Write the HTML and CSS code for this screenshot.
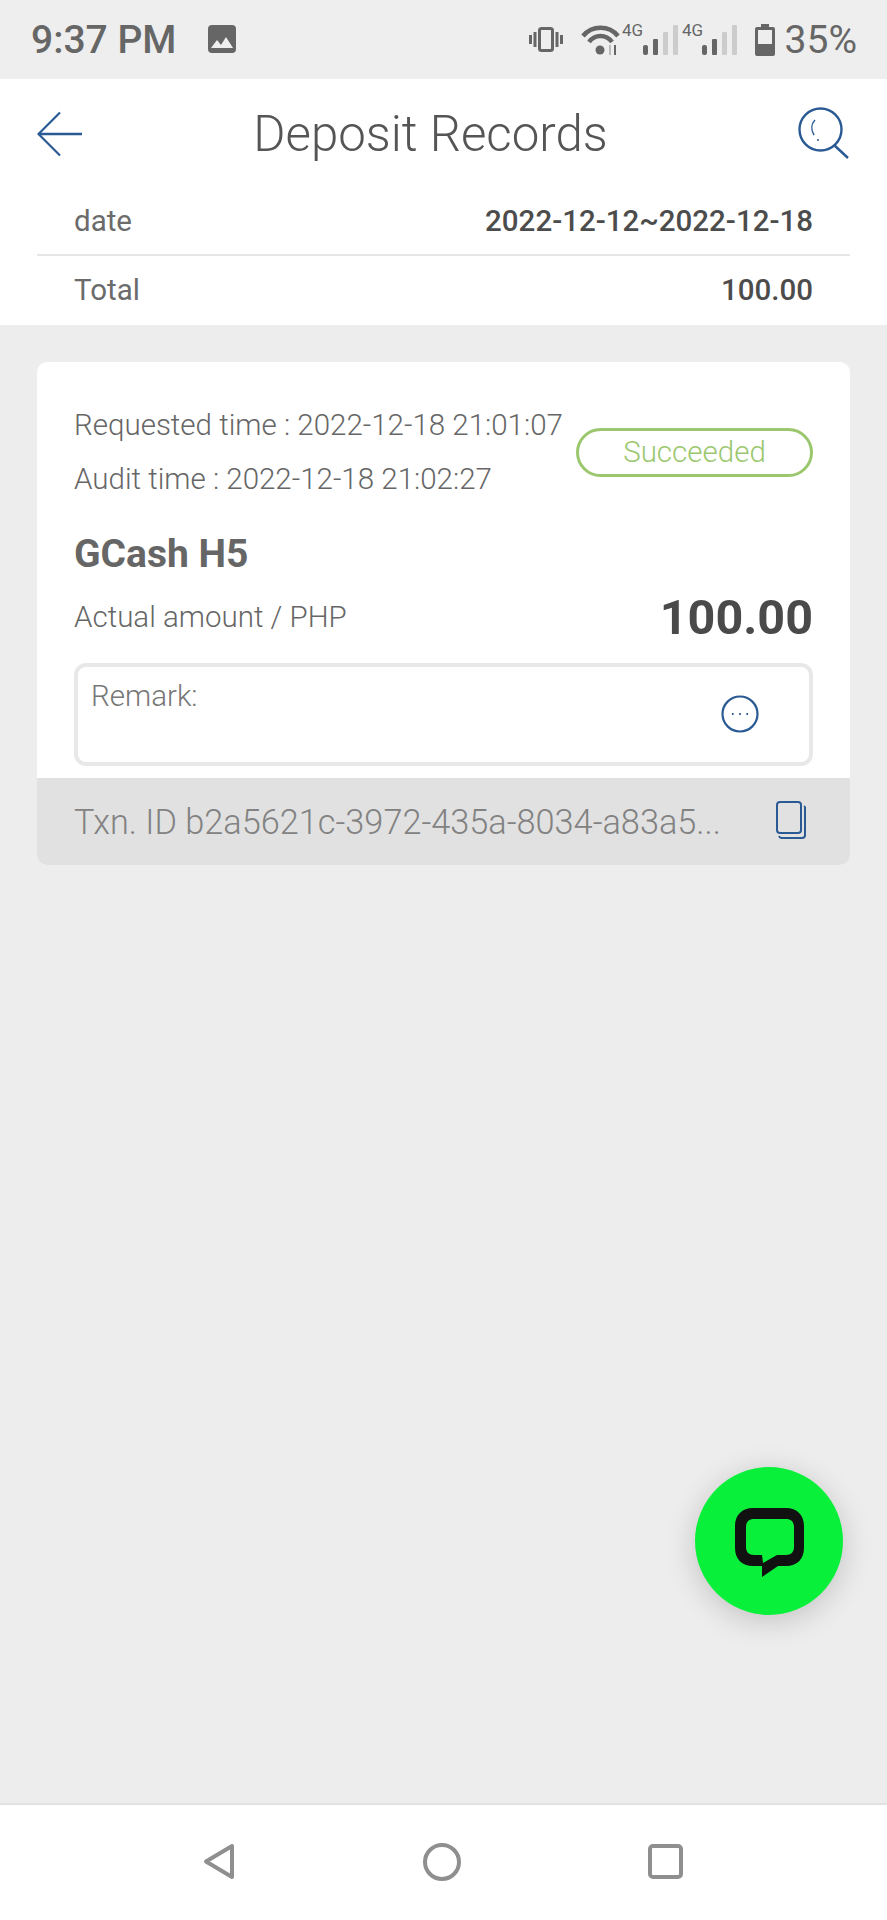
FILE: index.html
```html
<!DOCTYPE html>
<html lang="en">
<head>
<meta charset="utf-8">
<title>Deposit Records</title>
<link rel="stylesheet" href="styles.css">
</head>
<body>
<div class="page">
  <div class="status">
    <div class="status-left">
      <span class="clock">9:37 PM</span>
      <svg class="ic-image" viewBox="0 0 28 28"><rect width="28" height="28" rx="4" fill="#666"/><path d="M3 23l6-8 4 5 5-8 7 11z" fill="#eee"/></svg>
    </div>
    <div class="status-right">
      <svg class="ic-vib" viewBox="0 0 34 25" fill="none" stroke="#666"><rect x="10.5" y="1.5" width="13" height="22" rx="2" stroke-width="3"/><path d="M1.5 8v9M6 5v15M28 5v15M32.5 8v9" stroke-width="3"/></svg>
      <svg class="ic-wifi" viewBox="0 0 39 30" fill="none" stroke="#666"><path d="M2 11C11 0 28 0 37 11" stroke-width="4.500"/><path d="M8 17C14 9 25 9 31 17" stroke-width="4.500"/><circle cx="19" cy="25" r="4.500" fill="#666" stroke="none"/><path d="M29 20v10" stroke="#bbb" stroke-width="2"/><path d="M34 20v10" stroke="#666" stroke-width="2"/></svg>
      <svg class="ic-net" viewBox="0 0 58 34"><text class="net-label" x="0" y="15">4G</text><rect x="21" y="24" width="5" height="10" rx="2" fill="#666"/><rect x="31" y="18" width="5" height="16" rx="1" fill="#666"/><rect x="41" y="11" width="5" height="23" rx="1" fill="#ccc"/><rect x="51" y="4" width="5" height="30" rx="1" fill="#ccc"/></svg>
      <svg class="ic-net ic-net2" viewBox="0 0 58 34"><text class="net-label" x="0" y="15">4G</text><rect x="20" y="24" width="5" height="10" rx="2" fill="#666"/><rect x="30" y="18" width="5" height="16" rx="1" fill="#666"/><rect x="40" y="11" width="5" height="23" rx="1" fill="#ccc"/><rect x="50" y="4" width="5" height="30" rx="1" fill="#ccc"/></svg>
      <svg class="ic-batt" viewBox="0 0 20 32"><path d="M6 0h8v3h4a2 2 0 0 1 2 2v25a2 2 0 0 1-2 2H2a2 2 0 0 1-2-2V5a2 2 0 0 1 2-2h4z" fill="#666"/><rect x="3" y="6" width="14" height="14" fill="#eee"/></svg>
      <span class="pct">35%</span>
    </div>
  </div>

  <header class="head">
    <div class="nav">
      <svg class="ic-back" viewBox="0 0 46 46" fill="none" stroke="#2a5a94" stroke-width="2.200"><path d="M23 1.500L1.500 23 23 44.500"/><path d="M1.500 23H45" stroke-width="2.600"/></svg>
      <h1 class="title">Deposit Records</h1>
      <svg class="ic-search" viewBox="0 0 52 52" fill="none" stroke="#2a5a94" stroke-width="2.400"><circle cx="22.500" cy="22.500" r="21"/><path d="M36 38l14 13"/><path d="M17 13c-4 4-4 10-1 15" stroke-width="1.500"/><circle cx="20" cy="33" r="1" fill="#2a5a94" stroke="none"/></svg>
    </div>
    <div class="summary">
      <div class="sum-row sum-row-date"><span class="sum-label">date</span><span class="sum-value">2022-12-12~2022-12-18</span></div>
      <div class="sum-row sum-row-total"><span class="sum-label">Total</span><span class="sum-value">100.00</span></div>
    </div>
  </header>

  <main class="main">
    <article class="card">
      <div class="card-body">
        <div class="times">
          <div class="time-lines">
            <div class="time">Requested time : 2022-12-18 21:01:07</div>
            <div class="time">Audit time : 2022-12-18 21:02:27</div>
          </div>
          <span class="badge">Succeeded</span>
        </div>
        <div class="method">GCash H5</div>
        <div class="amount-row"><span class="amount-label">Actual amount / PHP</span><span class="amount">100.00</span></div>
        <div class="remark">
          <span class="remark-text">Remark:</span>
          <svg class="ic-more" viewBox="0 0 38 38" fill="none" stroke="#2a5a94" stroke-width="2.200"><circle cx="19" cy="19" r="17.500"/><path d="M11 19h1.600M18.200 19h1.600M25.400 19h1.600" stroke-width="1.800"/></svg>
        </div>
      </div>
      <div class="card-foot">
        <span class="txn">Txn. ID b2a5621c-3972-435a-8034-a83a5...</span>
        <svg class="ic-copy" viewBox="0 0 30 38" fill="none" stroke="#2a5a94" stroke-width="2"><rect x="1" y="1" width="24" height="31" rx="3"/><path d="M28 5a2 2 0 0 1 1 2v27a3 3 0 0 1-3 3H6a3 3 0 0 1-3-2"/></svg>
      </div>
    </article>
  </main>

  <button class="fab" type="button" aria-label="Chat">
    <svg class="ic-chat" viewBox="0 0 69 69"><path fill-rule="evenodd" d="M18 0h33c11 0 18 7 18 18v22c0 11-7 18-18 18H43L27 69V58h-9C7 58 0 51 0 40V18C0 7 7 0 18 0zm1 11c-5 0-8 3-8 8v20c0 5 3 8 8 8h8l1 8 14-8 9 0c5 0 8-3 8-8V19c0-5-3-8-8-8z" fill="#111"/></svg>
  </button>

  <nav class="sysnav">
    <svg class="ic-sys-back" viewBox="0 0 32 37" fill="none" stroke="#8f8f8f" stroke-width="4" stroke-linejoin="round"><path d="M29 3v31L3 18.500z"/></svg>
    <svg class="ic-sys-home" viewBox="0 0 38 38" fill="none" stroke="#8f8f8f" stroke-width="4"><circle cx="19" cy="19" r="17"/></svg>
    <svg class="ic-sys-recent" viewBox="0 0 35 35" fill="none" stroke="#8f8f8f" stroke-width="4"><rect x="2" y="2" width="31" height="31" rx="3"/></svg>
  </nav>
</div>
</body>
</html>
```

FILE: styles.css
```css
* { box-sizing: border-box; }
html, body { margin: 0; padding: 0; }
body { font-family: Roboto, "Liberation Sans", sans-serif; background: #ededed; }
svg { display: block; flex: none; }

.page { position: relative; width: 887px; height: 1920px; display: flex; flex-direction: column; }

.status { height: 79px; background: #eee; display: flex; justify-content: space-between; align-items: center; padding: 0 30px 0 31px; color: #666; flex: none; }
.status-left { display: flex; align-items: center; gap: 32px; }
.clock { font-size: 39px; font-weight: 500; line-height: 40px; }
.ic-image { width: 28px; height: 28px; margin-top: -1px; }
.status-right { display: flex; align-items: center; }
.ic-vib { width: 34px; height: 25px; margin-right: 18px; }
.ic-wifi { width: 39px; height: 30px; margin-right: 2px; }
.ic-net { width: 58px; height: 34px; margin-top: -4px; }
.ic-net2 { margin-left: 2px; }
.net-label { font-size: 17px; fill: #666; font-family: Roboto, sans-serif; }
.ic-batt { width: 20px; height: 32px; margin-left: 15px; margin-right: 10px; }
.pct { font-size: 39px; line-height: 40px; }

.head { background: #fff; flex: none; }
.nav { height: 110px; display: flex; align-items: center; justify-content: space-between; padding: 0 37px; }
.title { margin: 0 20px 0 0; font-size: 49.2px; font-weight: 300; color: #555; line-height: 60px; }
.ic-back { width: 46px; height: 46px; }
.ic-search { width: 52px; height: 52px; margin-top: -2px; }

.summary { padding: 0 37px; }
.sum-row { display: flex; justify-content: space-between; align-items: center; padding: 0 37px; font-size: 29.5px; }
.sum-row-date { height: 67px; padding-bottom: 2px; border-bottom: 2px solid #e6e6e6; }
.sum-row-total { height: 69px; padding-bottom: 2px; }
.sum-label { color: #6b6b6b; }
.sum-value { color: #4c4c4c; font-weight: 500; }

.main { flex: 1; padding: 37px 37px 0; }
.card { background: #fff; border-radius: 10px; overflow: hidden; }
.card-body { padding: 36px 37px 12px; }
.times { display: flex; justify-content: space-between; align-items: center; }
.time { font-size: 29.5px; font-weight: 300; line-height: 54px; color: #666; white-space: nowrap; }
.badge { width: 237px; height: 49px; border: 3px solid #9bc76e; border-radius: 25px; color: #9bc76e; font-size: 29.5px; font-weight: 300; display: flex; align-items: center; justify-content: center; }
.method { margin-top: 18px; font-size: 39px; font-weight: 700; line-height: 60px; color: #666; }
.amount-row { display: flex; justify-content: space-between; align-items: center; height: 66px; }
.amount-label { font-size: 29.5px; font-weight: 300; color: #666; }
.amount { font-size: 48.5px; font-weight: 700; color: #4a4a4a; }
.remark { margin-top: 13px; height: 103px; border: 4px solid #e8e8e8; border-radius: 12px; padding: 9px 13px 0; display: flex; justify-content: space-between; align-items: flex-start; }
.remark-text { font-size: 29.5px; font-weight: 300; color: #777; line-height: 40px; }
.ic-more { width: 38px; height: 38px; margin: 19px 37px 0 0; }
.card-foot { height: 87px; background: #e1e1e1; display: flex; align-items: center; justify-content: space-between; padding: 0 44px 0 37px; }
.txn { font-size: 34.3px; font-weight: 300; color: #828282; white-space: nowrap; }
.ic-copy { width: 30px; height: 38px; margin-top: -3px; }

.fab { position: absolute; left: 695px; top: 1467px; width: 148px; height: 148px; border: 0; border-radius: 50%; background: #08f03a; padding: 0; display: flex; align-items: center; justify-content: center; box-shadow: 0 6px 30px rgba(0,0,0,.18); }
.ic-chat { width: 69px; height: 69px; margin-top: 3px; }

.sysnav { height: 117px; flex: none; background: #fff; border-top: 2px solid #e2e2e2; display: flex; align-items: center; padding: 0 204px 2px 203px; justify-content: space-between; }
.ic-sys-back { width: 32px; height: 37px; }
.ic-sys-home { width: 38px; height: 38px; }
.ic-sys-recent { width: 35px; height: 35px; }
```
